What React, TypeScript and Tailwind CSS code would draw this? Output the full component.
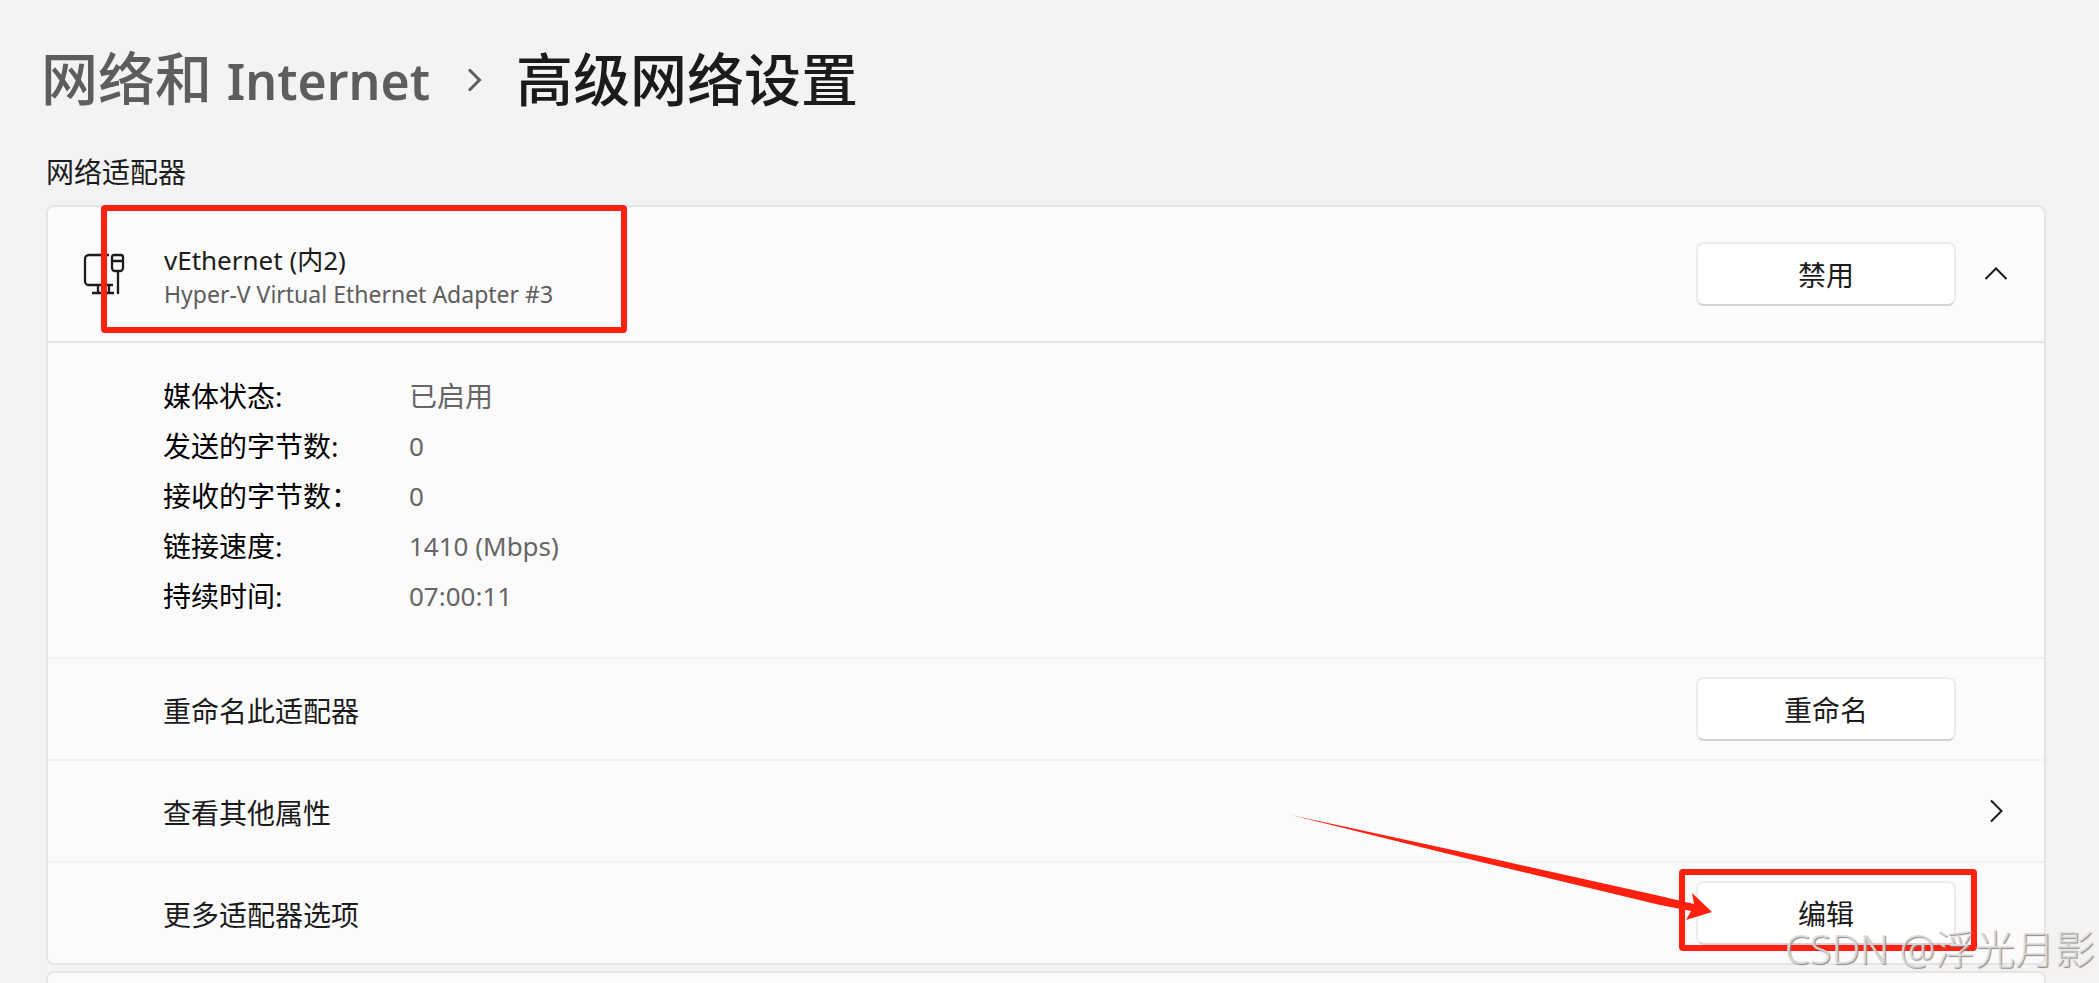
import React from 'react';

const details = [
  { label: '媒体状态:', value: '已启用', size: 'text-[28px]' },
  { label: '发送的字节数:', value: '0', size: 'text-[26px]' },
  { label: '接收的字节数：', value: '0', size: 'text-[26px]' },
  { label: '链接速度:', value: '1410 (Mbps)', size: 'text-[26px]' },
  { label: '持续时间:', value: '07:00:11', size: 'text-[26px]' },
];

function AdapterIcon() {
  return (
    <svg width="42" height="42" viewBox="0 0 42 42" fill="none" stroke="#1b1b1b" strokeWidth="2.3">
      <path d="M26 2H6a4 4 0 0 0-4 4v22a4 4 0 0 0 4 4h24" />
      <path d="M15 32v8M26 32v8M9 40h22" />
      <path d="M31 2h7a2 2 0 0 1 2 2v11a3 3 0 0 1-3 3h-5a3 3 0 0 1-3-3V4a2 2 0 0 1 2-2zM29 8h11M35 18v23" />
    </svg>
  );
}

function Chevron({ className = '', strokeWidth = 2 }: { className?: string; strokeWidth?: number }) {
  return (
    <svg
      className={className}
      width="24"
      height="24"
      viewBox="0 0 24 24"
      fill="none"
      stroke="currentColor"
      strokeWidth={strokeWidth}
    >
      <path d="M7 1.5 17.5 12 7 22.5" />
    </svg>
  );
}

function ActionButton({ children }: { children: React.ReactNode }) {
  return (
    <button
      type="button"
      className="h-16 w-[260px] rounded-lg border-2 border-[#ececec] border-b-[#d3d3d3] bg-white pt-0.5 text-[28px] leading-8 text-[#1b1b1b]"
    >
      {children}
    </button>
  );
}

function Row({ title, children }: { title: string; children: React.ReactNode }) {
  return (
    <div className="flex h-[102px] items-center border-t-2 border-[#f2f2f2] pr-9 pl-[115px]">
      <span className="flex-1 pt-1 text-[28px] leading-8">{title}</span>
      {children}
    </div>
  );
}

export default function App() {
  return (
    <div
      lang="zh-CN"
      className="relative h-screen overflow-hidden bg-[#f3f3f3] pt-12 pr-[53px] pl-[46px] font-['Noto_Sans','Noto_Sans_CJK_SC',sans-serif] text-[#1b1b1b]"
    >
      {/* Breadcrumb */}
      <nav className="-ml-[5px] flex h-16 items-center text-[57px] leading-[64px] font-medium">
        <a href="#network" className="pb-0.5 text-[#5d5d5d]">
          网络和 <span className="text-[50px] font-semibold">Internet</span>
        </a>
        <Chevron className="ml-8 mr-[30px] text-[#5d5d5d]" strokeWidth={3} />
        <h1 className="pb-0.5">高级网络设置</h1>
      </nav>

      <h2 className="mt-11 mb-[17px] text-[28px] leading-8">网络适配器</h2>

      {/* Adapter card */}
      <section className="rounded-lg border-2 border-[#e5e5e5] bg-[#fbfbfb]">
        <div className="relative flex h-[134px] items-center pr-9 pl-[35px]">
          <AdapterIcon />
          <div className="ml-[39px] flex-1 pt-1">
            <div className="text-[26px] leading-9">vEthernet (内2)</div>
            <div className="text-[23px] leading-8 text-[#5d5d5d]">Hyper-V Virtual Ethernet Adapter #3</div>
          </div>
          <ActionButton>禁用</ActionButton>
          <button type="button" aria-label="折叠" className="ml-7">
            <Chevron className="-rotate-90" />
          </button>
          <div className="absolute -top-0.5 left-[53px] h-32 w-[526px] rounded-sm border-[6px] border-[#ff2010]" />
        </div>

        <dl className="border-t-2 border-[#e5e5e5] pt-7 pb-9 pl-[115px] text-[28px] leading-[50px]">
          {details.map((item) => (
            <div key={item.label} className="flex">
              <dt className="w-[246px] text-black">{item.label}</dt>
              <dd className={`${item.size} leading-[50px] text-[#666666]`}>{item.value}</dd>
            </div>
          ))}
        </dl>

        <Row title="重命名此适配器">
          <div className="mr-[52px]">
            <ActionButton>重命名</ActionButton>
          </div>
        </Row>
        <Row title="查看其他属性">
          <button type="button" aria-label="查看其他属性">
            <Chevron />
          </button>
        </Row>
        <Row title="更多适配器选项">
          <div className="relative mr-[52px]">
            <ActionButton>编辑</ActionButton>
            <div className="absolute -top-3 -left-[17px] h-[82px] w-[298px] rounded-sm border-[6px] border-[#ff2010]" />
            <svg className="absolute -top-[66px] -left-[405px]" width="424" height="108" viewBox="0 0 424 108" fill="#ff2010">
              <path d="M0 0 194 42 369 81 403 89 401 78 421 97 395 105 400 96 369 90 194 48z" />
            </svg>
          </div>
        </Row>
      </section>

      <section className="mt-1.5 h-32 rounded-lg border-2 border-[#e5e5e5] bg-[#fbfbfb]" />

      {/* Watermark */}
      <div className="absolute right-1 bottom-2.5 text-[40px] leading-[48px] font-light text-[#dedede]/90 [text-shadow:1px_1px_1px_#888]">
        CSDN @浮光月影
      </div>
    </div>
  );
}
